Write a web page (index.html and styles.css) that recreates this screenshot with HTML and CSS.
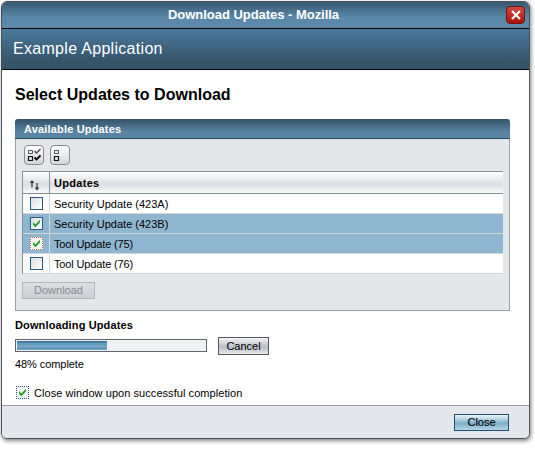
FILE: index.html
```html
<!DOCTYPE html>
<html lang="en">
<head>
<meta charset="utf-8">
<title>Download Updates - Mozilla</title>
<link rel="stylesheet" href="styles.css">
</head>
<body>
<div class="window">
  <header class="titlebar">
    <span class="title">Download Updates - Mozilla</span>
    <button class="close-x" aria-label="Close window"><svg width="10" height="10" viewBox="0 0 10 10"><path d="M1 1 9 9M9 1 1 9" stroke="#fff" stroke-width="2.2"/></svg></button>
  </header>
  <div class="masthead"><span>Example Application</span></div>
  <main class="content">
    <h1>Select Updates to Download</h1>
    <section class="panel">
      <h2>Available Updates</h2>
      <div class="panel-body">
        <div class="tools">
          <button class="tool" aria-label="Select all"><svg width="18" height="18" viewBox="0 0 18 18" fill="none"><path d="M3.5 4.5h4v3h-4z" stroke="#555"/><path d="M3.5 10.5h4v4h-4z" stroke="#111" stroke-width="1.2"/><path d="m9.5 5 2 2 4-4" stroke="#444" stroke-width="1.3"/><path d="m9.5 11.5 2 2 4-4" stroke="#000" stroke-width="1.8"/></svg></button>
          <button class="tool" aria-label="Deselect all"><svg width="18" height="18" viewBox="0 0 18 18" fill="none"><path d="M3.5 4.5h4v3h-4z" stroke="#555"/><path d="M3.5 10.5h4v4h-4z" stroke="#111" stroke-width="1.2"/></svg></button>
        </div>
        <div class="table">
          <div class="row head"><div class="pick"><svg width="12" height="12" viewBox="0 0 12 12" fill="#333"><path d="M3 1 5.3 4H3.6v4.5H2.4V4H.7zM8 11.5 5.7 8.5h1.7V4h1.2v4.5h1.7z"/></svg></div><div class="name">Updates</div></div>
          <div class="row"><div class="pick"><i class="check"></i></div><div class="name">Security Update (423A)</div></div>
          <div class="row on"><div class="pick"><i class="check"><svg width="11" height="11" viewBox="0 0 11 11"><path d="M2 4v2.8l2.3 2.4L9 4.5V1.7L4.3 6.4z" fill="#21a121"/></svg></i></div><div class="name">Security Update (423B)</div></div>
          <div class="row on"><div class="pick"><i class="check focus warm"><svg width="11" height="11" viewBox="0 0 11 11"><path d="M2 4v2.8l2.3 2.4L9 4.5V1.7L4.3 6.4z" fill="#21a121"/></svg></i></div><div class="name short">Tool Update (75)</div></div>
          <div class="row"><div class="pick"><i class="check"></i></div><div class="name short">Tool Update (76)</div></div>
        </div>
        <button class="download" disabled>Download</button>
      </div>
    </section>
    <h3>Downloading Updates</h3>
    <div class="progress-row">
      <div class="progress"><div class="bar" style="width:48%"></div></div>
      <button class="cancel">Cancel</button>
    </div>
    <div class="status">48% complete</div>
    <label class="option"><i class="check focus"><svg width="11" height="11" viewBox="0 0 11 11"><path d="M2 4v2.8l2.3 2.4L9 4.5V1.7L4.3 6.4z" fill="#21a121"/></svg></i><span>Close window upon successful completion</span></label>
  </main>
  <footer class="footer"><button class="close">Close</button></footer>
</div>
</body>
</html>
```
FILE: styles.css
```css
* { box-sizing: border-box; }
body { margin: 0; width: 535px; height: 455px; overflow: hidden; background: #fff; color: #000; font: 11px/14px "Liberation Sans", Arial, sans-serif; }
h1, h2, h3 { margin: 0; }
button { margin: 0; padding: 0; font: inherit; color: #000; border-radius: 0; }
svg { display: block; }
.window { margin: 1px 0 0 1px; width: 529px; height: 438px; border: 1px solid #4c5358; border-radius: 6px; overflow: hidden; display: flex; flex-direction: column; background: #fff; box-shadow: 1px 2px 4px rgba(0,0,0,.5); }
.titlebar { flex: none; height: 27px; border-bottom: 1px solid #000; background: linear-gradient(#375870 0, #5a88a9 60%, #5c8aab); display: grid; grid-template-columns: 1fr auto 1fr; align-items: center; }
.title { grid-column: 2; color: #fff; font-weight: bold; font-size: 13px; letter-spacing: -.03px; margin: 0 24px 0 0; }
.close-x { justify-self: end; margin: 0 4px 0 0; width: 19px; height: 18px; border: 1px solid #6c1712; border-radius: 4px; background: linear-gradient(#cf4b42, #b00f08); display: grid; place-items: center; }
.masthead { flex: none; height: 41px; border-bottom: 1px solid #000; background: linear-gradient(#4b799c, #35556b 80%); color: #fff; font-size: 16px; letter-spacing: .3px; line-height: 40px; padding-left: 11px; }
.content { flex: 1; padding: 15px 18px 0 13px; }
h1 { font-size: 16px; line-height: 19px; height: 34px; letter-spacing: .02px; }
.panel { height: 192px; width: 495px; border-radius: 3px 3px 0 0; overflow: hidden; }
h2 { height: 20px; background: linear-gradient(#345469, #5984a4 70%, #5984a4); border-bottom: 1px solid #294a60; color: #fff; font-size: 11px; letter-spacing: .17px; line-height: 20px; padding-left: 9px; }
.panel-body { height: 172px; background: #e3e7ea; border: solid #9b9fa2; border-width: 0 1px 1px; padding: 6px 6px 0; }
.tools { display: flex; gap: 6px; padding-left: 2px; height: 26px; }
.tool { width: 20px; height: 20px; border: 1px solid #878b90; border-radius: 4px; background: linear-gradient(#fff, #d3d6da); }
.table { width: 481px; border-left: 1px solid #7d929b; background: #fff; }
.row { height: 20px; display: flex; border-bottom: 1px solid #d3d8da; }
.row.on { background: #8fb6d0; }
.pick { width: 27px; border-right: 1px solid #d3d8da; display: flex; justify-content: center; align-items: center; }
.name { padding-left: 4px; line-height: 20px; }
.name.short { letter-spacing: -.14px; }
.head { height: 23px; border-top: 1px solid #7d929b; border-bottom-color: #7d929b; background: linear-gradient(#fff, #dcdde1 60%, #fafafa); font-weight: bold; }
.head .pick { border-color: #7d929b; padding: 4px 3px 0 0; }
.head .name { line-height: 22px; letter-spacing: .3px; }
.check { width: 13px; height: 13px; border: 1px solid #285b83; background: linear-gradient(135deg, #dcdfdf, #fff); display: block; flex: none; }
.check.focus { border-style: dotted; background: #f5f5f5; }
.check.warm { border-color: #b46a43; }
.download { display: block; margin-top: 8px; width: 73px; height: 17px; line-height: 15px; border: 1px solid #b5b8bc; background: linear-gradient(#dddfe2, #cbced3); color: #888c91; }
h3 { font-size: 11px; line-height: 14px; letter-spacing: .13px; margin-top: 7px; }
.progress-row { display: flex; align-items: flex-start; margin-top: 5px; height: 20px; }
.progress { margin-top: 2px; width: 192px; height: 13px; padding: 1px; border: 1px solid #626569; background: #f0f1f2; }
.bar { height: 9px; background: linear-gradient(#3f6e8e 0 1px, #629abd 2px 4px, #85b2d0 5px, #5a91b4 7px, #76a7c7); }
.cancel { margin-left: 11px; width: 51px; height: 18px; line-height: 16px; border: 1px solid #55585c; background: linear-gradient(#f5f5f6, #b9bdc7 55%, #e6e7ea); }
.status { letter-spacing: -.07px; }
.option { display: flex; gap: 5px; margin: 15px 0 0 1px; height: 14px; align-items: flex-start; line-height: 14px; letter-spacing: .06px; }
.footer { flex: none; height: 33px; border-top: 1px solid #999da1; background: #e3e7ec; padding: 8px 20px 0 0; display: flex; justify-content: flex-end; }
.close { width: 55px; height: 17px; line-height: 15px; border: 1px solid #235174; background: linear-gradient(#edf4f8, #7eb0cb 55%, #b2d4e5); -webkit-text-stroke: .15px #000; }
```
